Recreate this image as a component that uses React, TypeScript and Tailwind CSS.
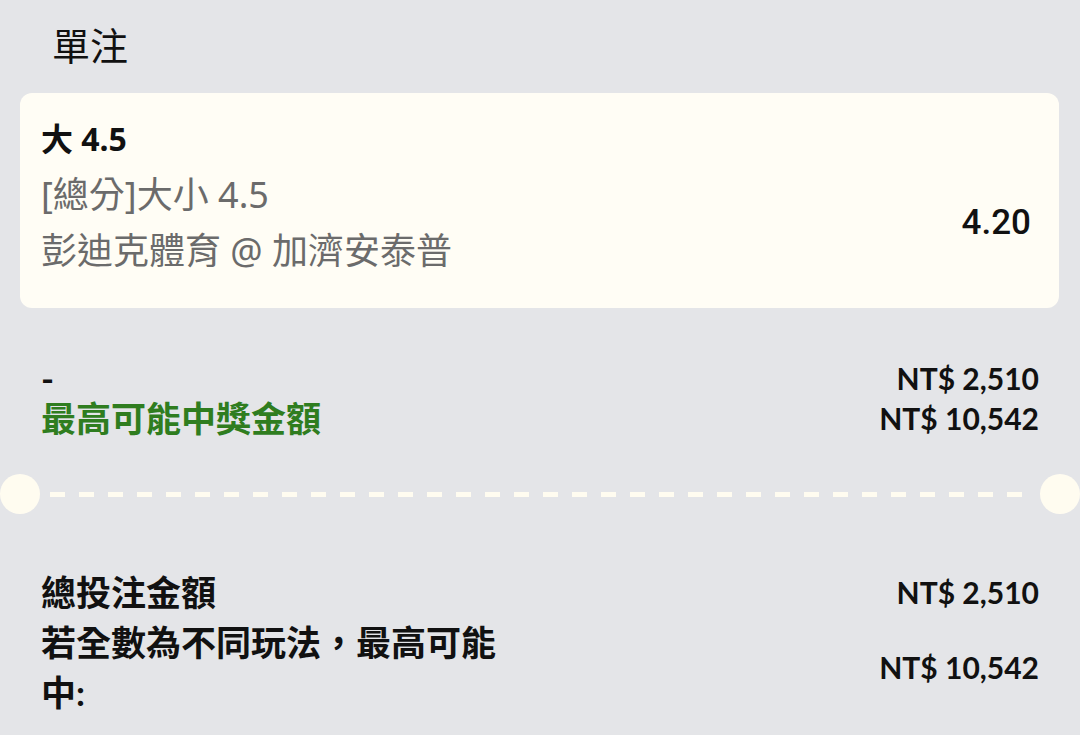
import React from 'react';

const latin = "font-['Lato','Noto_Sans_CJK_TC',sans-serif]";
const cjk = "font-['Noto_Sans','Noto_Sans_CJK_TC',sans-serif]";

const Money: React.FC<{ children: React.ReactNode }> = ({ children }) => (
  <div className={`${latin} text-[30px] font-bold text-right`}>{children}</div>
);

const Divider: React.FC = () => (
  <div className="flex items-center h-[40px] mt-[36px]">
    <div className="w-[40px] h-[40px] rounded-full bg-[#fffcf0] shrink-0" />
    <div className="flex-1 mx-[10px] h-[5px] bg-[repeating-linear-gradient(90deg,#fffcf0_0px,#fffcf0_15px,transparent_15px,transparent_29px)]" />
    <div className="w-[40px] h-[40px] rounded-full bg-[#fffcf0] shrink-0" />
  </div>
);

export default function App() {
  return (
    <div className={`w-[1080px] h-[735px] overflow-hidden bg-[#e4e5e8] text-[#111] flex flex-col ${latin}`}>
      <div className={`pt-[20px] pl-[52px] text-[38px] leading-[50px] ${cjk}`}>單注</div>

      {/* selection card */}
      <div className={`mt-[23px] mx-[20px] w-[1039px] rounded-[12px] bg-[#fffdf5] pl-[21px] pr-[28px] pt-[18px] pb-[29px] text-[36px] leading-[56px] ${cjk}`}>
        <div className="font-bold text-[32px]">大 4.5</div>
        <div className="flex justify-between items-center">
          <div className="text-[#6b6b6b]">
            <div>[總分]大小 4.5</div>
            <div>彭迪克體育 @ 加濟安泰普</div>
          </div>
          <div className="font-['Roboto',sans-serif] font-medium text-[35px]">4.20</div>
        </div>
      </div>

      {/* stake / potential win */}
      <div className="mt-[50px] px-[41px] flex justify-between items-start text-[35px] leading-[40px] font-bold">
        <div>
          <div>-</div>
          <div className="text-[#2f7d1f]">最高可能中獎金額</div>
        </div>
        <div>
          <Money>NT$ 2,510</Money>
          <Money>NT$ 10,542</Money>
        </div>
      </div>

      <Divider />

      {/* totals */}
      <div className="mt-[53px] px-[41px] grid grid-cols-[1fr_auto] items-center text-[35px] leading-[50px] font-bold">
        <div>總投注金額</div>
        <Money>NT$ 2,510</Money>
        <div className="w-[470px]">若全數為不同玩法，最高可能中:</div>
        <Money>NT$ 10,542</Money>
      </div>
    </div>
  );
}
